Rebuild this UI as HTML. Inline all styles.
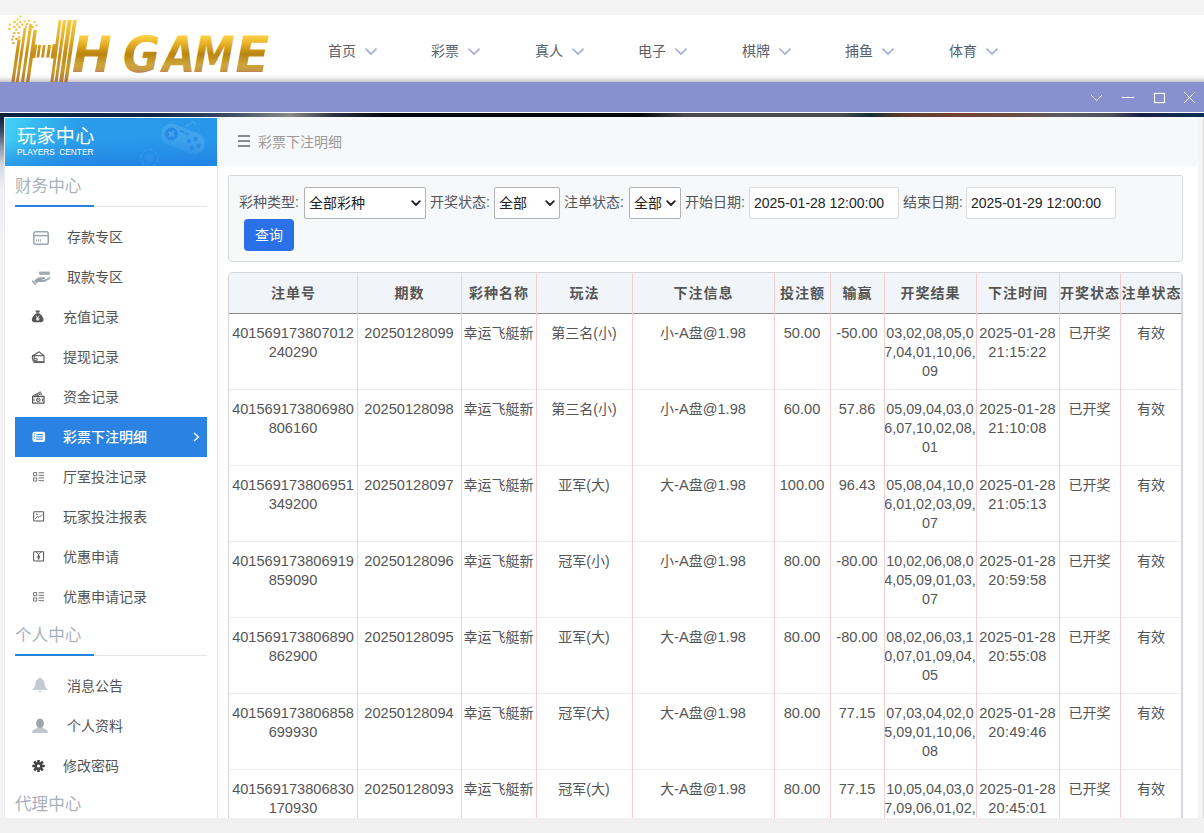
<!DOCTYPE html>
<html lang="zh-CN">
<head>
<meta charset="utf-8">
<title>彩票下注明细</title>
<style>
*{box-sizing:border-box;margin:0;padding:0}
html,body{width:1204px;height:833px;overflow:hidden}
body{position:relative;background:#f3f3f3;font-family:"Liberation Sans","Noto Sans CJK SC",sans-serif;font-size:14px;color:#555}
.abs{position:absolute}
/* top header */
#topbar{position:absolute;left:0;top:15px;width:1204px;height:67px;background:#fff}
#topshadow{position:absolute;left:0;top:74px;width:1204px;height:8px;background:linear-gradient(to bottom,rgba(0,0,0,0),rgba(0,0,0,0.04) 40%,rgba(0,0,0,0.22))}
.nav{position:absolute;top:41px;height:20px;line-height:20px;font-size:14px;color:#5a5e6b;white-space:nowrap}
.nav svg{position:absolute;left:36.5px;top:7.2px}
/* purple bar */
#winbar{position:absolute;left:0;top:82px;width:1204px;height:30px;background:#8791cf}
#winline{position:absolute;left:0;top:112px;width:1204px;height:1px;background:#fff}
#darkstrip{position:absolute;left:0;top:113px;width:1204px;height:5px;background:linear-gradient(to right,#07213f 0px,#0a2444 150px,#3a4a66 230px,#8a8a86 290px,#2a3040 335px,#06080f 385px,#05060a 640px,#4a4a4c 685px,#4a4c4e 840px,#123038 870px,#5a3a2a 900px,#744334 960px,#6a4a40 1010px,#5a5a60 1060px,#50505a 1110px,#1a1f48 1140px,#0a3058 1204px)}
#leftstrip{position:absolute;left:0;top:117px;width:5px;height:701px;background:linear-gradient(to bottom,#0a2240 0,#3a4860 14px,#8e96a8 30px,#d5d8e0 48px,#eeeff3 70px,#f4f4f7 120px,#f4f4f6 100%)}
#rightstrip{position:absolute;left:1198px;top:117px;width:6px;height:701px;background:#f4f4f4;border-right:1px solid #dcdcdc}
#bottomstrip{position:absolute;left:0;top:818px;width:1204px;height:15px;background:#f0f0f0}
/* sidebar */
#side{position:absolute;left:4px;top:117px;width:214px;height:701px;background:#fff;border-left:1px solid #e8eaee;border-right:1px solid #e4e7ec;overflow:hidden}
#sidehead{position:absolute;left:0;top:1px;width:212px;height:48px;background:linear-gradient(to bottom,rgba(30,120,225,0) 0%,rgba(30,120,225,0) 45%,rgba(28,118,224,0.55) 100%),linear-gradient(105deg,#43d2f7 0%,#38bbf0 14%,#2a9cea 34%,#2896e9 100%);overflow:hidden}
#sidehead .t1{position:absolute;left:12px;top:7px;letter-spacing:0.4px;font-size:19px;line-height:24px;color:#fff;white-space:nowrap}
#sidehead .t2{position:absolute;left:12px;top:28px;font-size:8.35px;line-height:12px;color:#fff;white-space:nowrap;word-spacing:2px}
.sec{position:absolute;left:10px;font-size:16.6px;line-height:22px;color:#a9b1bc;white-space:nowrap}
.secline{position:absolute;left:10px;width:192px;height:1px;background:#e3e5e8}
.secline i{position:absolute;left:0;top:-1px;width:79px;height:2px;background:#2283e2}
.mi{position:absolute;left:10px;width:192px;height:40px;line-height:40px;font-size:14px;color:#555;white-space:nowrap}
.mi span{position:absolute;left:48px;top:0}
.mi.big span{left:52px}
.mi.on{background:#2a83e3;color:#fff;font-weight:500}
.mi svg{position:absolute}
/* main */
#main{position:absolute;left:218px;top:117px;width:980px;height:701px;background:#fff;overflow:hidden}
#crumb{position:absolute;left:0;top:0;width:980px;height:49px;background:#f7f8fa}
#crumb span{position:absolute;left:40px;top:15px;font-size:14px;line-height:20px;color:#999}
#filter{position:absolute;left:10px;top:58px;width:955px;height:87px;background:#f7f8fa;border:1px solid #d5d9de;border-radius:2px 2px 4px 4px}
.fl{position:absolute;font-size:14px;line-height:20px;color:#555;white-space:nowrap}
.sel,.inp{position:absolute;height:32px;background:#fff;border:1px solid #b2b2b2;border-radius:2px;font-size:14px;line-height:30px;color:#222;padding-left:4px;white-space:nowrap}
.inp{border-color:#d9dadc;line-height:30px}
.sel svg{position:absolute;right:4px;top:12px}
#btn{position:absolute;width:50px;height:32px;background:#2a70e8;border-radius:4px;color:#fff;font-size:14px;line-height:32px;text-align:center}
#tbl{position:absolute;left:10px;top:155px;width:955px;height:600px;border:1px solid #d3d7dd;border-radius:4px 4px 0 0;overflow:hidden;background:#fff}
#thead{position:absolute;left:0;top:0;width:953px;height:41px;background:#f1f4f8;border-bottom:1px solid #8f8585}
.th{position:absolute;top:0;height:40px;line-height:40px;text-align:center;font-weight:bold;font-size:14px;letter-spacing:1px;padding-left:1px;color:#555;white-space:nowrap}
.vl{position:absolute;top:0;width:1px;height:600px;background:#f3cfd2}
.row{position:absolute;left:0;width:953px;height:76px;border-bottom:1px solid #ebedf0}
.td{position:absolute;top:10px;text-align:center;font-size:14px;line-height:19px;color:#555;white-space:nowrap}
.td .n{font-size:14.6px}
.td .c{font-size:14.3px}
.td .d{font-size:14.6px;letter-spacing:0.2px}
.td .m{font-size:14.6px}
.td .p{font-size:14px}
.td.w{white-space:normal}

</style>
</head>
<body>
<div id="topbar"></div>
<div id="topshadow"></div>
<svg id="logo" width="300" height="85" viewBox="0 0 300 85" style="position:absolute;left:0;top:0">
<defs><linearGradient id="gold" gradientUnits="userSpaceOnUse" x1="0" y1="18" x2="0" y2="83"><stop offset="0" stop-color="#fbd047"/><stop offset="0.3" stop-color="#e3ae28"/><stop offset="0.55" stop-color="#c38d16"/><stop offset="0.8" stop-color="#c99a2c"/><stop offset="1" stop-color="#a97338"/></linearGradient><linearGradient id="gold2" gradientUnits="userSpaceOnUse" x1="0" y1="-36.5" x2="0" y2="0.3"><stop offset="0" stop-color="#fdd145"/><stop offset="0.25" stop-color="#e2aa22"/><stop offset="0.5" stop-color="#b98510"/><stop offset="0.78" stop-color="#cda53a"/><stop offset="0.92" stop-color="#c89a45"/><stop offset="1" stop-color="#b97d55"/></linearGradient></defs>
<g fill="url(#gold)">
<polygon points="11.3,82 14.5,82 20.7,39.4 17.5,39.4"/>
<polygon points="15.9,82 18.7,82 26.5,28 23.7,28"/>
<polygon points="21.0,82 24.0,82 32.4,23.8 29.4,23.8"/>
<polygon points="26.0,82 29.4,82 37.0,29.7 33.6,29.7"/>
<polygon points="50.4,82 53.3,82 61.5,20 58.6,20"/>
<polygon points="54.6,82 57.5,82 66.3,20 63.0,20"/>
<polygon points="59.2,82 63.0,82 71.8,20 67.6,20"/>
<polygon points="64.2,82 67.6,82 76.8,20 73.0,20"/>
<polygon points="32.5,57.9 35.3,57.9 37.2,44.4 34.4,44.4"/>
<polygon points="36.5,57.5 39.3,57.5 41.0,45 38.2,45"/>
<polygon points="41.1,57.5 43.9,57.5 45.6,45 42.9,45"/>
<polygon points="46.2,57.5 49.3,57.5 51.0,45 48.0,45"/>
<polygon points="50.6,58.4 56.0,58.4 58.0,44.2 52.6,44.2"/>
<rect x="19.4" y="15.4" width="2.2" height="2.2" rx="0.5"/>
<rect x="16.4" y="18.4" width="2.2" height="2.2" rx="0.5"/>
<rect x="13.4" y="20.7" width="2.2" height="2.2" rx="0.5"/>
<rect x="19.2" y="20.7" width="2.2" height="2.2" rx="0.5"/>
<rect x="23.6" y="20.4" width="2.2" height="2.2" rx="0.5"/>
<rect x="27.6" y="19.5" width="2.2" height="2.2" rx="0.5"/>
<rect x="33.4" y="20.9" width="2.2" height="2.2" rx="0.5"/>
<rect x="8.7" y="23.4" width="2.2" height="2.2" rx="0.5"/>
<rect x="16.2" y="23.2" width="2.2" height="2.2" rx="0.5"/>
<rect x="21.2" y="23.5" width="2.2" height="2.2" rx="0.5"/>
<rect x="25.9" y="22.9" width="2.2" height="2.2" rx="0.5"/>
<rect x="35.6" y="24.4" width="2.2" height="2.2" rx="0.5"/>
<rect x="13.2" y="25.7" width="2.2" height="2.2" rx="0.5"/>
<rect x="18.4" y="25.9" width="2.2" height="2.2" rx="0.5"/>
<rect x="24.9" y="25.6" width="2.2" height="2.2" rx="0.5"/>
<rect x="31.9" y="26.1" width="2.2" height="2.2" rx="0.5"/>
<rect x="8.4" y="27.9" width="2.2" height="2.2" rx="0.5"/>
<rect x="15.2" y="28.5" width="2.2" height="2.2" rx="0.5"/>
<rect x="13.2" y="31.9" width="2.2" height="2.2" rx="0.5"/>
<rect x="17.4" y="31.9" width="2.2" height="2.2" rx="0.5"/>
<rect x="12.2" y="35.4" width="2.2" height="2.2" rx="0.5"/>
<rect x="18.2" y="36.4" width="2.2" height="2.2" rx="0.5"/>
<rect x="11.1" y="38.4" width="2.2" height="2.2" rx="0.5"/>
<rect x="15.4" y="37.7" width="2.2" height="2.2" rx="0.5"/>
<rect x="12.2" y="41.9" width="2.2" height="2.2" rx="0.5"/>
</g>
<text y="0" transform="translate(66.5,72.4) skewX(-10.5)" font-family="DejaVu Sans,sans-serif" font-weight="bold" font-size="50" fill="url(#gold2)" style="white-space:pre"><tspan x="1.9" textLength="39.8" lengthAdjust="spacingAndGlyphs">H</tspan> <tspan x="52.7" textLength="37.2" lengthAdjust="spacingAndGlyphs">G</tspan><tspan x="92.9" textLength="32.4" lengthAdjust="spacingAndGlyphs">A</tspan><tspan x="124.1" textLength="40.4" lengthAdjust="spacingAndGlyphs">M</tspan><tspan x="165.2" textLength="34.4" lengthAdjust="spacingAndGlyphs">E</tspan></text>
</svg>
<div class="nav" style="left:328px">首页<svg width="12" height="8" viewBox="0 0 12 8"><path d="M1 1.2 L6 6.2 L11 1.2" fill="none" stroke="#a9b2d6" stroke-width="1.8" stroke-linecap="round" stroke-linejoin="round"/></svg></div>
<div class="nav" style="left:431px">彩票<svg width="12" height="8" viewBox="0 0 12 8"><path d="M1 1.2 L6 6.2 L11 1.2" fill="none" stroke="#a9b2d6" stroke-width="1.8" stroke-linecap="round" stroke-linejoin="round"/></svg></div>
<div class="nav" style="left:535px">真人<svg width="12" height="8" viewBox="0 0 12 8"><path d="M1 1.2 L6 6.2 L11 1.2" fill="none" stroke="#a9b2d6" stroke-width="1.8" stroke-linecap="round" stroke-linejoin="round"/></svg></div>
<div class="nav" style="left:638px">电子<svg width="12" height="8" viewBox="0 0 12 8"><path d="M1 1.2 L6 6.2 L11 1.2" fill="none" stroke="#a9b2d6" stroke-width="1.8" stroke-linecap="round" stroke-linejoin="round"/></svg></div>
<div class="nav" style="left:742px">棋牌<svg width="12" height="8" viewBox="0 0 12 8"><path d="M1 1.2 L6 6.2 L11 1.2" fill="none" stroke="#a9b2d6" stroke-width="1.8" stroke-linecap="round" stroke-linejoin="round"/></svg></div>
<div class="nav" style="left:845px">捕鱼<svg width="12" height="8" viewBox="0 0 12 8"><path d="M1 1.2 L6 6.2 L11 1.2" fill="none" stroke="#a9b2d6" stroke-width="1.8" stroke-linecap="round" stroke-linejoin="round"/></svg></div>
<div class="nav" style="left:949px">体育<svg width="12" height="8" viewBox="0 0 12 8"><path d="M1 1.2 L6 6.2 L11 1.2" fill="none" stroke="#a9b2d6" stroke-width="1.8" stroke-linecap="round" stroke-linejoin="round"/></svg></div>
<div id="winbar"><svg width="120" height="30" viewBox="0 0 120 30" style="position:absolute;left:1084px;top:0"><g fill="none" stroke="#fff" stroke-width="1.1"><path d="M7 13 L12.5 18.5 L18 13" stroke-width="1"/><path d="M38 15.5 H50"/><rect x="70.5" y="11.4" width="10" height="9.2"/><path d="M100 10 L111 21 M111 10 L100 21" stroke-width="1"/></g></svg></div>
<div id="winline"></div><div id="darkstrip"></div><div id="leftstrip"></div><div id="rightstrip"></div>
<div id="side"><div id="sidehead"><svg class="abs" style="left:0;top:0" width="212" height="48" viewBox="0 0 212 48"><defs><linearGradient id="gpf" gradientUnits="userSpaceOnUse" x1="0" y1="4" x2="0" y2="40"><stop offset="0" stop-color="#6bbcf5" stop-opacity="0.42"/><stop offset="0.5" stop-color="#6bbcf5" stop-opacity="0.3"/><stop offset="1" stop-color="#6bbcf5" stop-opacity="0.03"/></linearGradient></defs><rect x="154.85" y="10.2" width="45.8" height="21.6" rx="10.8" fill="url(#gpf)" transform="rotate(21.8 177.75 21)"/><circle cx="166.4" cy="16" r="6.4" fill="#2482e2" opacity="0.8"/><path d="M162.6 16 H170.2 M166.4 12.2 V19.8" stroke="#6bbcf5" stroke-width="2.2" opacity="0.45" transform="rotate(40 166.4 16)"/><g fill="#2482e2" opacity="0.7"><circle cx="183.8" cy="23" r="2.3"/><circle cx="190.7" cy="21" r="2.3"/><circle cx="186.8" cy="30" r="2.3"/><circle cx="193.7" cy="27.5" r="2.3"/><rect x="174.8" y="12.6" width="4.6" height="1.8" transform="rotate(24 177 13.5)"/><rect x="179.6" y="15.1" width="4.6" height="1.8" transform="rotate(24 182 16)"/></g><path d="M180.5 9 C182 5 184 8.5 186 5.5 C187.5 3 188.5 2 190.5 6.5" fill="none" stroke="#6bbcf5" stroke-width="1" opacity="0.6"/><circle cx="144.5" cy="40" r="8.6" fill="none" stroke="#58aef0" stroke-width="2" opacity="0.22" stroke-dasharray="5 1.5"/><circle cx="144.5" cy="40" r="4.5" fill="#4aa2ec" opacity="0.22"/></svg><div class="t1">玩家中心</div><div class="t2">PLAYERS CENTER</div></div></div>
<div class="sec" style="left:15px;top:176px">财务中心</div>
<div class="secline" style="left:15px;top:206px"><i></i></div>
<div class="mi big" style="left:15px;top:217px"><svg class="abs" style="left:17px;top:13px" width="18" height="16" viewBox="0 0 18 16"><rect x="1.75" y="1.75" width="14.5" height="12.5" rx="2" fill="none" stroke="#9aa5b0" stroke-width="1.5"/><path d="M1.75 5.6 H16.25" stroke="#9aa5b0" stroke-width="1.5"/><path d="M4.6 9.3 V11.6 M6.5 9.3 V11.6 M8.4 9.3 V11.6" stroke="#9aa5b0" stroke-width="1"/></svg><span>存款专区</span></div>
<div class="mi big" style="left:15px;top:257px"><svg class="abs" style="left:17px;top:14px" width="20" height="14" viewBox="0 0 20 14"><rect x="7.2" y="0.6" width="10.6" height="3.2" fill="#9aa5b0" opacity="0.95"/><path d="M2.2 10.2 C3.5 8 5.5 6.3 8 6.2 L12.5 6.2 C13.6 6.2 13.6 7.9 12.5 7.9 L10 7.9 L10 8.4 L13.2 8.4 L17.2 6.3 C18.3 5.8 19 7 18 7.7 L13.5 10.6 C12.8 11 12 11.1 11.2 11.1 L6 11.1 L4.6 12.4 Z" fill="#9aa5b0"/><path d="M0.6 10.4 L3.4 13.2" stroke="#9aa5b0" stroke-width="1.6" stroke-linecap="round"/></svg><span>取款专区</span></div>
<div class="mi " style="left:15px;top:297px"><svg class="abs" style="left:16.4px;top:13px" width="13.4" height="13" viewBox="0 0 14 14"><path d="M4.6 0.6 L9.4 0.6 L8.5 3 L5.5 3 Z" fill="#555"/><path d="M5.3 3.6 L8.7 3.6 C11.5 5.5 13.3 8.5 13.3 10.6 C13.3 12.3 12.2 13.2 10.6 13.2 L3.4 13.2 C1.8 13.2 0.7 12.3 0.7 10.6 C0.7 8.5 2.5 5.5 5.3 3.6 Z" fill="#555"/><path d="M5.2 6.2 L7 8.4 L8.8 6.2 M7 8.4 V11.6 M5.2 9 H8.8 M5.2 10.4 H8.8" fill="none" stroke="#fff" stroke-width="0.9"/></svg><span>充值记录</span></div>
<div class="mi " style="left:15px;top:337px"><svg class="abs" style="left:16.4px;top:13.5px" width="14" height="13" viewBox="0 0 14 13"><path d="M1 5.2 L8.2 0.8 L12.8 4.6" fill="none" stroke="#555" stroke-width="1.1" stroke-linejoin="round"/><path d="M2.2 4.2 L1.2 6.5 L2.4 10.5" fill="none" stroke="#555" stroke-width="1.1"/><rect x="3.2" y="4.7" width="9.8" height="6.6" fill="none" stroke="#555" stroke-width="1.1"/><path d="M3.2 11 H13" stroke="#555" stroke-width="1.5"/><path d="M3.4 7.6 H6.2 V9.4 H3.4" fill="none" stroke="#555" stroke-width="0.9"/></svg><span>提现记录</span></div>
<div class="mi " style="left:15px;top:377px"><svg class="abs" style="left:16.4px;top:14px" width="14" height="13" viewBox="0 0 14 13"><path d="M1.2 5.4 L9.4 0.8 L11.2 4.6 M3.6 4.9 L8.8 2.2 M5.6 5 L10 3" fill="none" stroke="#555" stroke-width="0.9" stroke-linejoin="round"/><rect x="1.6" y="5.5" width="11.4" height="6.6" fill="none" stroke="#555" stroke-width="1.2"/><circle cx="7.3" cy="8.8" r="1.8" fill="none" stroke="#555" stroke-width="1"/><path d="M3 7.4 V10.2 M11.6 7.4 V10.2 M6.4 8.8 H8.2" stroke="#555" stroke-width="0.9"/></svg><span>资金记录</span></div>
<div class="mi on" style="left:15px;top:417px"><svg class="abs" style="left:17px;top:14px" width="14" height="12" viewBox="0 0 14 12"><rect x="0.5" y="0.8" width="12.6" height="10.2" rx="2" fill="#fff"/><path d="M4.2 3.6 H11 M4.2 5.9 H11 M4.2 8.2 H11" stroke="#2a83e3" stroke-width="1"/><path d="M2.6 2.4 V9.4" stroke="#2a83e3" stroke-width="0.9" stroke-dasharray="1.2 1.1"/></svg><span>彩票下注明细</span><svg class="abs" style="left:178px;top:15px" width="7" height="10" viewBox="0 0 7 10"><path d="M1 1 L5.4 5 L1 9" fill="none" stroke="#fff" stroke-width="1.4"/></svg></div>
<div class="mi " style="left:15px;top:457px"><svg class="abs" style="left:18px;top:15px" width="12" height="10.2" viewBox="0 0 13 11"><rect x="0.6" y="0.6" width="3.4" height="3.4" rx="0.2" fill="none" stroke="#666" stroke-width="1"/><rect x="0.6" y="6.4" width="3.4" height="3.4" rx="0.2" fill="none" stroke="#666" stroke-width="1"/><path d="M6 0.8 H12 M6 3.6 H12 M6 6.4 H12 M6 9.4 H12" stroke="#666" stroke-width="1"/></svg><span>厅室投注记录</span></div>
<div class="mi " style="left:15px;top:497px"><svg class="abs" style="left:18px;top:14px" width="12" height="11.1" viewBox="0 0 13 12"><rect x="0.7" y="0.7" width="10.8" height="10.2" rx="0.8" fill="none" stroke="#555" stroke-width="1.1"/><path d="M2.6 8.4 L4.8 5.6 L6.6 7 L9.8 3.8" fill="none" stroke="#555" stroke-width="1"/><circle cx="4.2" cy="3.4" r="0.8" fill="#555"/></svg><span>玩家投注报表</span></div>
<div class="mi " style="left:15px;top:537px"><svg class="abs" style="left:18px;top:14px" width="12" height="11.1" viewBox="0 0 13 12"><rect x="0.7" y="0.7" width="10.8" height="10.2" rx="0.8" fill="none" stroke="#555" stroke-width="1.1"/><path d="M3.2 0.8 L6.1 3.8 L9 0.8" fill="none" stroke="#555" stroke-width="0.9"/><path d="M6.1 3.8 V9.4 M4.6 5.6 H7.6 M4.6 7.2 H7.6" stroke="#555" stroke-width="1.1"/></svg><span>优惠申请</span></div>
<div class="mi " style="left:15px;top:577px"><svg class="abs" style="left:18px;top:15px" width="12" height="10.2" viewBox="0 0 13 11"><rect x="0.6" y="0.6" width="3.4" height="3.4" rx="0.2" fill="none" stroke="#666" stroke-width="1"/><rect x="0.6" y="6.4" width="3.4" height="3.4" rx="0.2" fill="none" stroke="#666" stroke-width="1"/><path d="M6 0.8 H12 M6 3.6 H12 M6 6.4 H12 M6 9.4 H12" stroke="#666" stroke-width="1"/></svg><span>优惠申请记录</span></div>
<div class="sec" style="left:15px;top:625px">个人中心</div>
<div class="secline" style="left:15px;top:655px"><i></i></div>
<div class="mi big" style="left:15px;top:666px"><svg class="abs" style="left:15.6px;top:11px" width="18" height="16" viewBox="0 0 18 16"><path d="M9 0.6 C9.8 0.6 10.2 1.1 10.2 1.8 C12.6 2.5 13.6 4.4 13.6 6.6 C13.6 9.6 14.6 10.8 16.2 12 L16.2 12.8 L1.8 12.8 L1.8 12 C3.4 10.8 4.4 9.6 4.4 6.6 C4.4 4.4 5.4 2.5 7.8 1.8 C7.8 1.1 8.2 0.6 9 0.6 Z" fill="#c3c9d0"/><path d="M7.4 13.6 H10.6 C10.4 14.6 9.8 15 9 15 C8.2 15 7.6 14.6 7.4 13.6 Z" fill="#c3c9d0"/></svg><span>消息公告</span></div>
<div class="mi big" style="left:15px;top:706px"><svg class="abs" style="left:16px;top:12px" width="18" height="16" viewBox="0 0 18 16"><path d="M1 15 C1 12.4 2.6 11.4 5.2 10.6 C6.4 10.2 6.8 9.8 6.8 9 L11.2 9 C11.2 9.8 11.6 10.2 12.8 10.6 C15.4 11.4 17 12.4 17 15 Z" fill="#c0c7ce"/><ellipse cx="9" cy="5.4" rx="3.9" ry="4.8" fill="#9ea7b0"/></svg><span>个人资料</span></div>
<div class="mi " style="left:15px;top:746px"><svg class="abs" style="left:17px;top:14px" width="13" height="12" viewBox="0 0 13 12"><rect x="5.2" y="-0.2" width="2.6" height="3" rx="0.5" fill="#444" transform="rotate(0 6.5 6)"/><rect x="5.2" y="-0.2" width="2.6" height="3" rx="0.5" fill="#444" transform="rotate(45 6.5 6)"/><rect x="5.2" y="-0.2" width="2.6" height="3" rx="0.5" fill="#444" transform="rotate(90 6.5 6)"/><rect x="5.2" y="-0.2" width="2.6" height="3" rx="0.5" fill="#444" transform="rotate(135 6.5 6)"/><rect x="5.2" y="-0.2" width="2.6" height="3" rx="0.5" fill="#444" transform="rotate(180 6.5 6)"/><rect x="5.2" y="-0.2" width="2.6" height="3" rx="0.5" fill="#444" transform="rotate(225 6.5 6)"/><rect x="5.2" y="-0.2" width="2.6" height="3" rx="0.5" fill="#444" transform="rotate(270 6.5 6)"/><rect x="5.2" y="-0.2" width="2.6" height="3" rx="0.5" fill="#444" transform="rotate(315 6.5 6)"/><circle cx="6.5" cy="6" r="3.9" fill="#444"/><circle cx="6.5" cy="6" r="1.6" fill="#fff"/></svg><span>修改密码</span></div>
<div class="sec" style="left:15px;top:794px">代理中心</div>
<div id="main">
<div id="crumb"><svg class="abs" style="left:20px;top:18px" width="12" height="12" viewBox="0 0 12 12"><path d="M0 1 H12 M0 6 H12 M0 11 H12" stroke="#8a8a8a" stroke-width="2"/></svg><span>彩票下注明细</span></div>
<div id="filter">
<div class="fl" style="left:10px;top:16px">彩种类型:</div>
<div class="sel" style="left:75px;top:11px;width:122px">全部彩种<svg width="10" height="7" viewBox="0 0 10 7"><path d="M1.2 1.2 L5 5 L8.8 1.2" fill="none" stroke="#222" stroke-width="1.8" stroke-linecap="round" stroke-linejoin="round"/></svg></div>
<div class="fl" style="left:201px;top:16px">开奖状态:</div>
<div class="sel" style="left:265px;top:11px;width:66px">全部<svg width="10" height="7" viewBox="0 0 10 7"><path d="M1.2 1.2 L5 5 L8.8 1.2" fill="none" stroke="#222" stroke-width="1.8" stroke-linecap="round" stroke-linejoin="round"/></svg></div>
<div class="fl" style="left:335px;top:16px">注单状态:</div>
<div class="sel" style="left:400px;top:11px;width:52px">全部<svg width="10" height="7" viewBox="0 0 10 7"><path d="M1.2 1.2 L5 5 L8.8 1.2" fill="none" stroke="#222" stroke-width="1.8" stroke-linecap="round" stroke-linejoin="round"/></svg></div>
<div class="fl" style="left:456px;top:16px">开始日期:</div>
<div class="inp" style="left:520px;top:11px;width:150px">2025-01-28 12:00:00</div>
<div class="fl" style="left:674px;top:16px">结束日期:</div>
<div class="inp" style="left:737px;top:11px;width:150px">2025-01-29 12:00:00</div>
<div id="btn" style="left:15px;top:43px">查询</div>
</div>
<div id="tbl">
<div id="thead"></div>
<div class="th" style="left:0px;width:128px">注单号</div>
<div class="th" style="left:128px;width:104px">期数</div>
<div class="th" style="left:232px;width:75px">彩种名称</div>
<div class="th" style="left:307px;width:96px">玩法</div>
<div class="th" style="left:403px;width:142px">下注信息</div>
<div class="th" style="left:545px;width:56px">投注额</div>
<div class="th" style="left:601px;width:54px">输赢</div>
<div class="th" style="left:655px;width:92px">开奖结果</div>
<div class="th" style="left:747px;width:83px">下注时间</div>
<div class="th" style="left:830px;width:61px">开奖状态</div>
<div class="th" style="left:891px;width:62px">注单状态</div>
<div class="row" style="top:41px"><div class="td w" style="left:0px;width:128px"><span class="n">401569173807012<wbr>240290</span></div><div class="td" style="left:128px;width:104px"><span class="n">20250128099</span></div><div class="td" style="left:232px;width:75px">幸运飞艇新</div><div class="td" style="left:307px;width:96px">第三名<span class="p">(</span>小<span class="p">)</span></div><div class="td" style="left:403px;width:142px">小<span class="m">-A</span>盘<span class="m">@1.98</span></div><div class="td" style="left:545px;width:56px"><span class="n">50.00</span></div><div class="td" style="left:601px;width:54px"><span class="n">-50.00</span></div><div class="td w" style="left:655px;width:92px"><span class="c">03,02,08,05,0<wbr>7,04,01,10,06,<wbr>09</span></div><div class="td w" style="left:747px;width:83px"><span class="d">2025-01-28 21:15:22</span></div><div class="td" style="left:830px;width:61px">已开奖</div><div class="td" style="left:891px;width:62px">有效</div></div>
<div class="row" style="top:117px"><div class="td w" style="left:0px;width:128px"><span class="n">401569173806980<wbr>806160</span></div><div class="td" style="left:128px;width:104px"><span class="n">20250128098</span></div><div class="td" style="left:232px;width:75px">幸运飞艇新</div><div class="td" style="left:307px;width:96px">第三名<span class="p">(</span>小<span class="p">)</span></div><div class="td" style="left:403px;width:142px">小<span class="m">-A</span>盘<span class="m">@1.98</span></div><div class="td" style="left:545px;width:56px"><span class="n">60.00</span></div><div class="td" style="left:601px;width:54px"><span class="n">57.86</span></div><div class="td w" style="left:655px;width:92px"><span class="c">05,09,04,03,0<wbr>6,07,10,02,08,<wbr>01</span></div><div class="td w" style="left:747px;width:83px"><span class="d">2025-01-28 21:10:08</span></div><div class="td" style="left:830px;width:61px">已开奖</div><div class="td" style="left:891px;width:62px">有效</div></div>
<div class="row" style="top:193px"><div class="td w" style="left:0px;width:128px"><span class="n">401569173806951<wbr>349200</span></div><div class="td" style="left:128px;width:104px"><span class="n">20250128097</span></div><div class="td" style="left:232px;width:75px">幸运飞艇新</div><div class="td" style="left:307px;width:96px">亚军<span class="p">(</span>大<span class="p">)</span></div><div class="td" style="left:403px;width:142px">大<span class="m">-A</span>盘<span class="m">@1.98</span></div><div class="td" style="left:545px;width:56px"><span class="n">100.00</span></div><div class="td" style="left:601px;width:54px"><span class="n">96.43</span></div><div class="td w" style="left:655px;width:92px"><span class="c">05,08,04,10,0<wbr>6,01,02,03,09,<wbr>07</span></div><div class="td w" style="left:747px;width:83px"><span class="d">2025-01-28 21:05:13</span></div><div class="td" style="left:830px;width:61px">已开奖</div><div class="td" style="left:891px;width:62px">有效</div></div>
<div class="row" style="top:269px"><div class="td w" style="left:0px;width:128px"><span class="n">401569173806919<wbr>859090</span></div><div class="td" style="left:128px;width:104px"><span class="n">20250128096</span></div><div class="td" style="left:232px;width:75px">幸运飞艇新</div><div class="td" style="left:307px;width:96px">冠军<span class="p">(</span>小<span class="p">)</span></div><div class="td" style="left:403px;width:142px">小<span class="m">-A</span>盘<span class="m">@1.98</span></div><div class="td" style="left:545px;width:56px"><span class="n">80.00</span></div><div class="td" style="left:601px;width:54px"><span class="n">-80.00</span></div><div class="td w" style="left:655px;width:92px"><span class="c">10,02,06,08,0<wbr>4,05,09,01,03,<wbr>07</span></div><div class="td w" style="left:747px;width:83px"><span class="d">2025-01-28 20:59:58</span></div><div class="td" style="left:830px;width:61px">已开奖</div><div class="td" style="left:891px;width:62px">有效</div></div>
<div class="row" style="top:345px"><div class="td w" style="left:0px;width:128px"><span class="n">401569173806890<wbr>862900</span></div><div class="td" style="left:128px;width:104px"><span class="n">20250128095</span></div><div class="td" style="left:232px;width:75px">幸运飞艇新</div><div class="td" style="left:307px;width:96px">亚军<span class="p">(</span>大<span class="p">)</span></div><div class="td" style="left:403px;width:142px">大<span class="m">-A</span>盘<span class="m">@1.98</span></div><div class="td" style="left:545px;width:56px"><span class="n">80.00</span></div><div class="td" style="left:601px;width:54px"><span class="n">-80.00</span></div><div class="td w" style="left:655px;width:92px"><span class="c">08,02,06,03,1<wbr>0,07,01,09,04,<wbr>05</span></div><div class="td w" style="left:747px;width:83px"><span class="d">2025-01-28 20:55:08</span></div><div class="td" style="left:830px;width:61px">已开奖</div><div class="td" style="left:891px;width:62px">有效</div></div>
<div class="row" style="top:421px"><div class="td w" style="left:0px;width:128px"><span class="n">401569173806858<wbr>699930</span></div><div class="td" style="left:128px;width:104px"><span class="n">20250128094</span></div><div class="td" style="left:232px;width:75px">幸运飞艇新</div><div class="td" style="left:307px;width:96px">冠军<span class="p">(</span>大<span class="p">)</span></div><div class="td" style="left:403px;width:142px">大<span class="m">-A</span>盘<span class="m">@1.98</span></div><div class="td" style="left:545px;width:56px"><span class="n">80.00</span></div><div class="td" style="left:601px;width:54px"><span class="n">77.15</span></div><div class="td w" style="left:655px;width:92px"><span class="c">07,03,04,02,0<wbr>5,09,01,10,06,<wbr>08</span></div><div class="td w" style="left:747px;width:83px"><span class="d">2025-01-28 20:49:46</span></div><div class="td" style="left:830px;width:61px">已开奖</div><div class="td" style="left:891px;width:62px">有效</div></div>
<div class="row" style="top:497px"><div class="td w" style="left:0px;width:128px"><span class="n">401569173806830<wbr>170930</span></div><div class="td" style="left:128px;width:104px"><span class="n">20250128093</span></div><div class="td" style="left:232px;width:75px">幸运飞艇新</div><div class="td" style="left:307px;width:96px">冠军<span class="p">(</span>大<span class="p">)</span></div><div class="td" style="left:403px;width:142px">大<span class="m">-A</span>盘<span class="m">@1.98</span></div><div class="td" style="left:545px;width:56px"><span class="n">80.00</span></div><div class="td" style="left:601px;width:54px"><span class="n">77.15</span></div><div class="td w" style="left:655px;width:92px"><span class="c">10,05,04,03,0<wbr>7,09,06,01,02,<wbr>08</span></div><div class="td w" style="left:747px;width:83px"><span class="d">2025-01-28 20:45:01</span></div><div class="td" style="left:830px;width:61px">已开奖</div><div class="td" style="left:891px;width:62px">有效</div></div>
<div class="vl" style="left:128px"></div>
<div class="vl" style="left:232px"></div>
<div class="vl" style="left:307px"></div>
<div class="vl" style="left:403px"></div>
<div class="vl" style="left:545px"></div>
<div class="vl" style="left:601px"></div>
<div class="vl" style="left:655px"></div>
<div class="vl" style="left:747px"></div>
<div class="vl" style="left:830px"></div>
<div class="vl" style="left:891px"></div>
<div class="vl" style="left:952px"></div>
</div>
</div>
<div id="bottomstrip"></div>
</body>
</html>
